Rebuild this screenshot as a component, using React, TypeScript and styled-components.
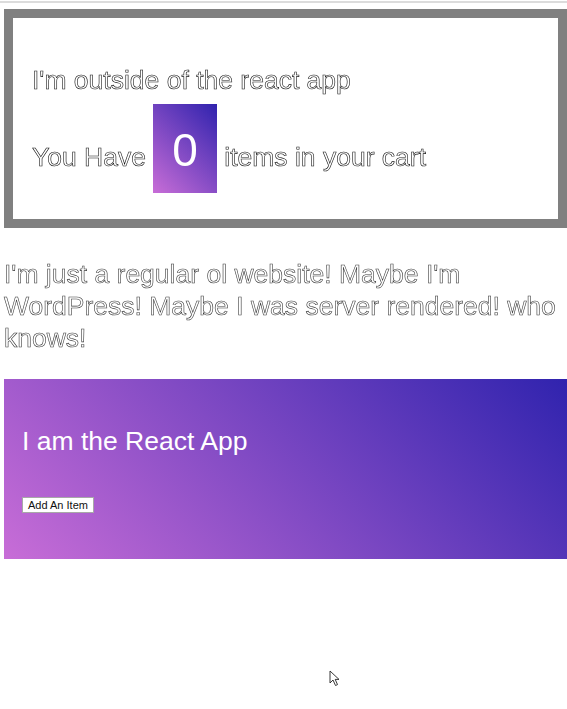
import React from "react";
import styled, { createGlobalStyle } from "styled-components";

const GlobalStyle = createGlobalStyle`
  html, body {
    margin: 0;
    padding: 0;
    background: #ffffff;
  }
  body {
    font-family: "Liberation Sans", Arial, Helvetica, sans-serif;
    -webkit-font-smoothing: antialiased;
  }
`;

const gradient = "linear-gradient(45deg, #c86dd7 0%, #3023ae 100%)";

const Page = styled.div`
  position: relative;
  min-height: 709px;
  overflow: hidden;
`;

const TopRule = styled.div`
  margin-top: 1px;
  height: 2px;
  background: #dcdcdc;
`;

const Content = styled.div`
  padding-left: 4px;
`;

const OutsideBox = styled.section`
  margin-top: 6px;
  border: 9px solid #808080;
  padding: 46px 19px 26px;
  background: #ffffff;
`;

const OutlineLine = styled.div<{ $gap?: number }>`
  margin: ${(p) => p.$gap ?? 0}px 0 0;
  font-size: 26.5px;
  line-height: 32px;
  color: #ffffff;
  white-space: nowrap;
  -webkit-text-stroke: 0.6px #111111;
  will-change: transform;
`;

const CartBadge = styled.span`
  display: inline-block;
  background: ${gradient};
  color: #ffffff;
  font-size: 46px;
  line-height: 46px;
  padding: 23px 19px 20px;
  -webkit-text-stroke: 0;
`;

const Paragraph = styled.p`
  margin: 30px 0 0;
  font-size: 26.5px;
  line-height: 32px;
  color: #ffffff;
  -webkit-text-stroke: 0.6px #3a3a3a;
  will-change: transform;
`;

const ReactApp = styled.section`
  margin-top: 25px;
  height: 180px;
  box-sizing: border-box;
  padding: 46px 18px 46px;
  background: ${gradient};
  display: flex;
  flex-direction: column;
  align-items: flex-start;
  gap: 40px;
`;

const AppTitle = styled.h1`
  margin: 0;
  font-size: 26.5px;
  line-height: 32px;
  font-weight: 400;
  color: #ffffff;
`;

const AddButton = styled.button`
  height: 16px;
  box-sizing: border-box;
  padding: 0 5px;
  border: 1px solid #a8a8a8;
  background: #ffffff;
  color: #111111;
  font-family: "Liberation Sans", Arial, sans-serif;
  font-size: 11px;
  line-height: 14px;
  cursor: default;
`;

const Cursor = styled.svg`
  position: absolute;
  left: 329px;
  top: 670px;
  width: 12px;
  height: 18px;
`;

export default function App() {
  const count = 0;
  return (
    <Page>
      <GlobalStyle />
      <TopRule />
      <Content>
        <OutsideBox>
          <OutlineLine>I'm outside of the react app</OutlineLine>
          <OutlineLine $gap={8}>
            You Have <CartBadge>{count}</CartBadge> items in your cart
          </OutlineLine>
        </OutsideBox>
        <Paragraph>
          I'm just a regular ol website! Maybe I'm WordPress! Maybe I was
          server rendered! who knows!
        </Paragraph>
        <ReactApp>
          <AppTitle>I am the React App</AppTitle>
          <AddButton type="button">Add An Item</AddButton>
        </ReactApp>
      </Content>
      <Cursor viewBox="0 0 12 18" aria-hidden="true">
        <path
          d="M1 1 L1 13 L4 10 L6.5 15.5 L8.5 14.6 L6.2 9.4 L10 9.4 Z"
          fill="#ffffff"
          stroke="#222222"
          strokeWidth="0.9"
          strokeLinejoin="round"
        />
      </Cursor>
    </Page>
  );
}
